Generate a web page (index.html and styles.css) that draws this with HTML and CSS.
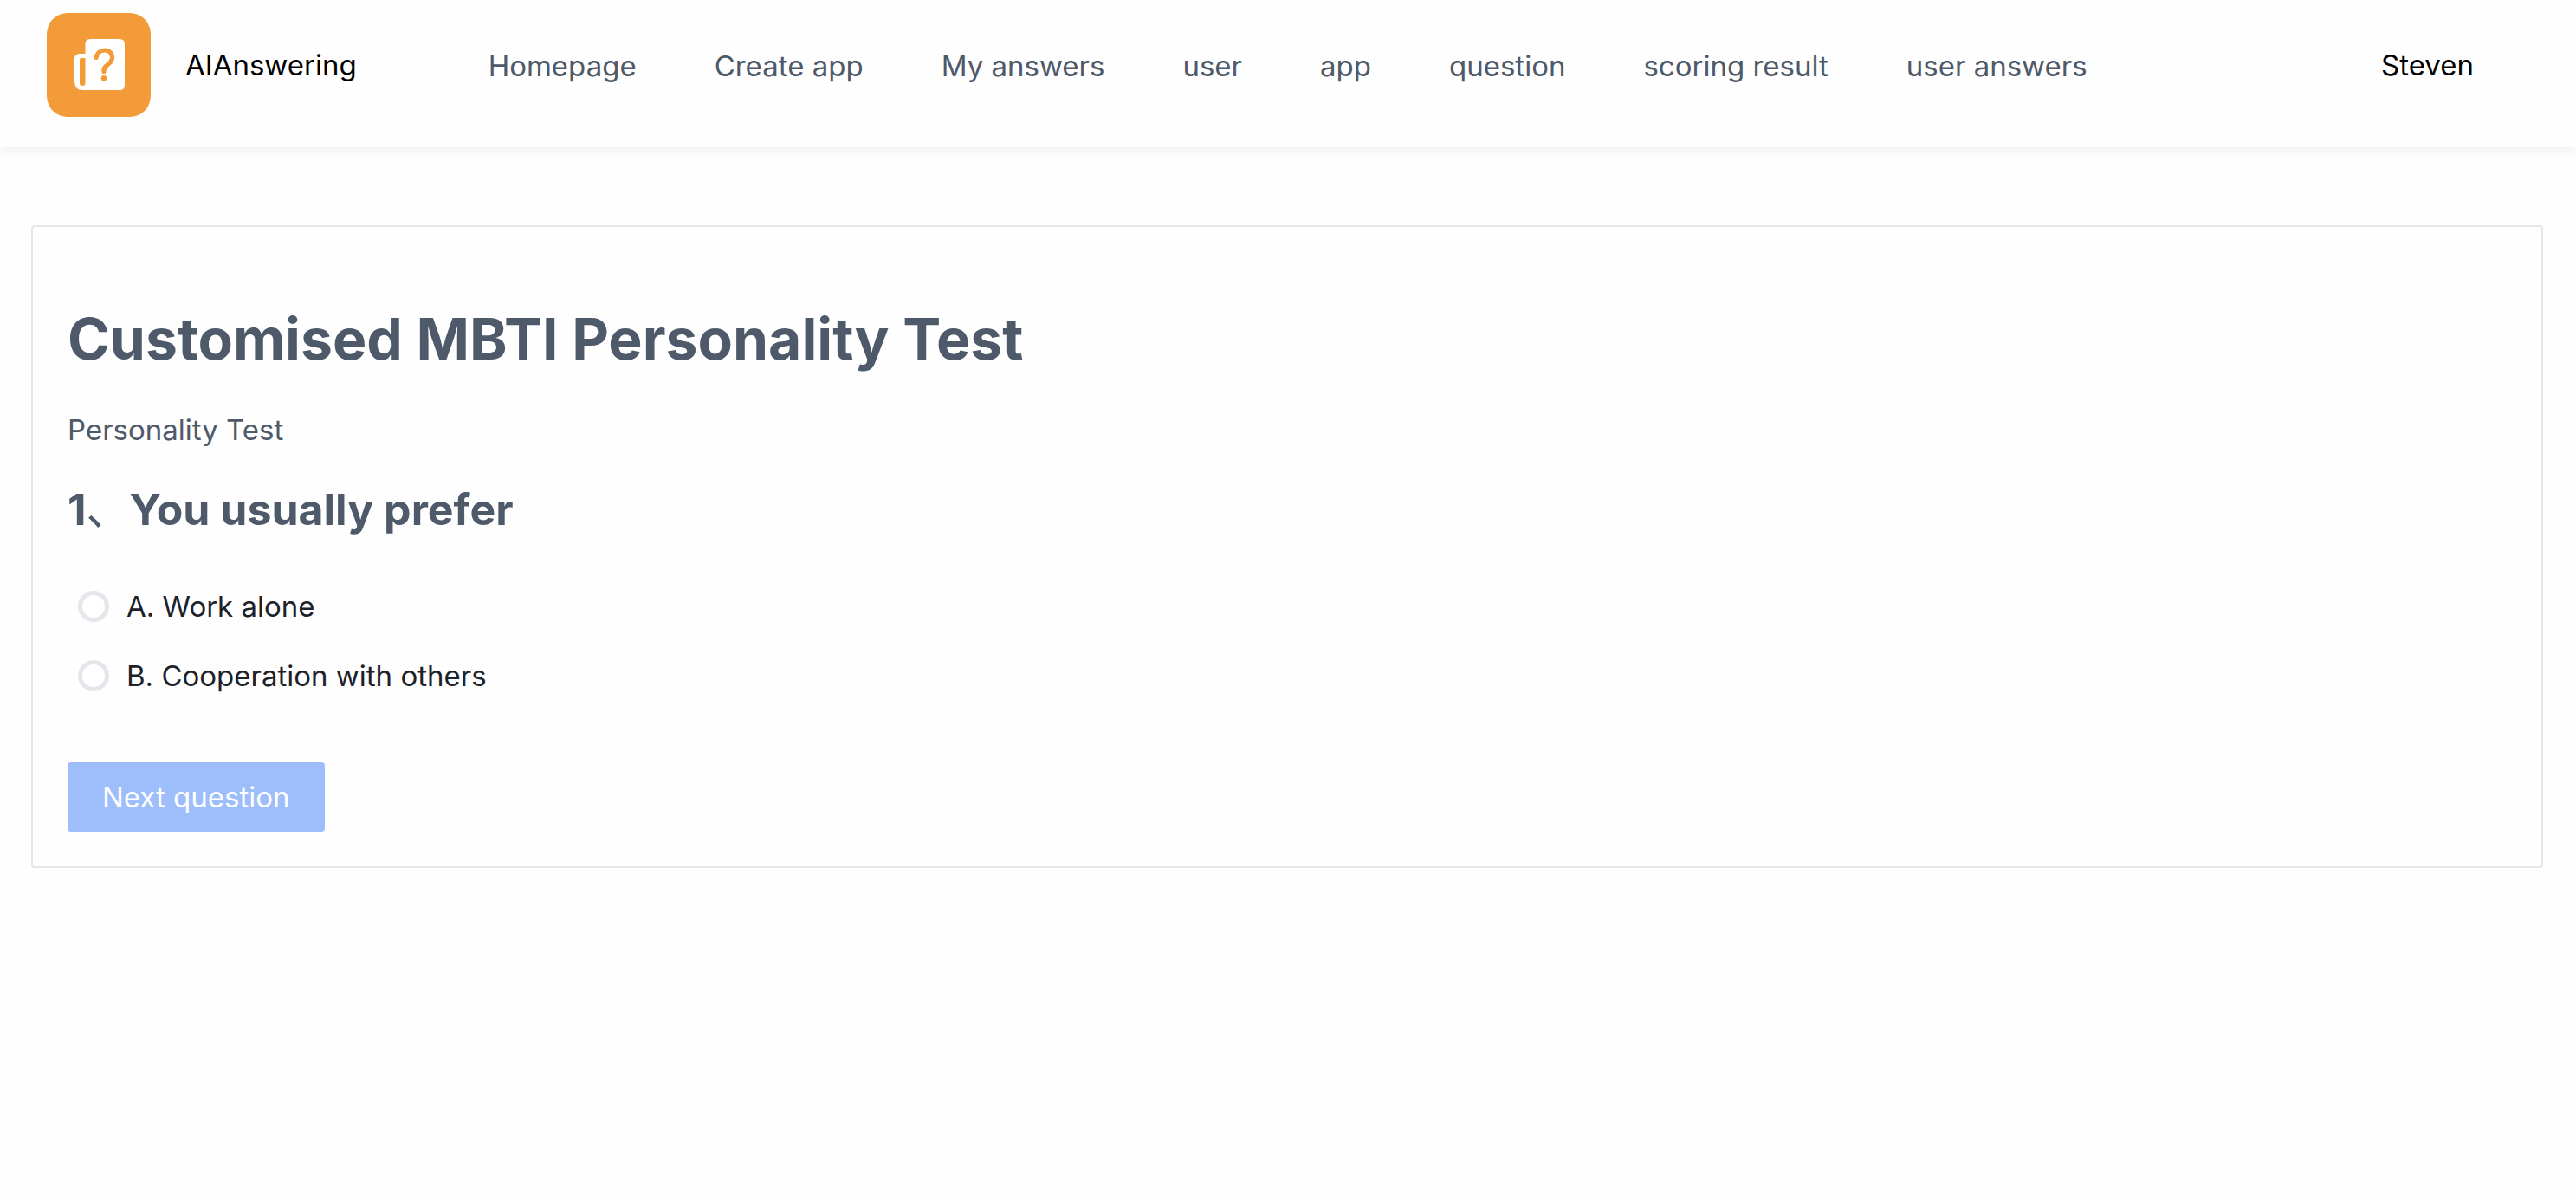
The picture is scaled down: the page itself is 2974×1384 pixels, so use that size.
FILE: index.html
```html
<!DOCTYPE html>
<html lang="en">
<head>
<meta charset="utf-8">
<meta name="viewport" content="width=device-width, initial-scale=1">
<title>AIAnswering</title>
<link rel="stylesheet" href="styles.css">
</head>
<body>
<header class="header">
  <a class="brand" href="#">
    <svg class="logo" viewBox="0 0 120 120" aria-hidden="true">
      <path fill="#f29b38" d="M26 0H94C110 0 120 10 120 26V94C120 110 110 120 94 120H26C10 120 0 110 0 94V26C0 10 10 0 26 0Z"/>
      <path fill="#fff" d="M50 30H84Q90 30 90 36V83Q90 89 84 89H42Q32 89 32 79V53Q32 47 38 47H44.500V36Q44.500 30 50 30Z"/>
      <path fill="#f29b38" d="M40 52H44.500V81Q44.500 84 41.300 84Q38 84 38 81V54Q38 52 40 52Z"/>
      <path fill="none" stroke="#f29b38" stroke-width="5.200" stroke-linecap="round" stroke-linejoin="round" d="M57.200 51.500C58 46 62 43 67 43C72 43 75.600 46.500 75.600 51C75.600 60 66 59 66 66V67.500"/>
      <circle fill="#f29b38" cx="66" cy="75.300" r="3.300"/>
    </svg>
    <span>AIAnswering</span>
  </a>
  <nav class="nav">
    <a href="#">Homepage</a>
    <a href="#">Create app</a>
    <a href="#">My answers</a>
    <a href="#">user</a>
    <a href="#">app</a>
    <a href="#">question</a>
    <a href="#">scoring result</a>
    <a href="#">user answers</a>
  </nav>
  <div class="user">Steven</div>
</header>
<main class="content">
  <form class="card">
    <h1 class="title">Customised MBTI Personality Test</h1>
    <p class="desc">Personality Test</p>
    <h2 class="question" id="question">1<span class="mark">、</span>You usually prefer</h2>
    <div class="options" role="radiogroup" aria-labelledby="question">
      <label class="option"><input type="radio" name="answer" value="A">A. Work alone</label>
      <label class="option"><input type="radio" name="answer" value="B">B. Cooperation with others</label>
    </div>
    <button class="next" type="button" disabled>Next question</button>
  </form>
</main>
</body>
</html>
```
FILE: styles.css
```css
* {
  box-sizing: border-box;
}

body {
  margin: 0;
  background: #fefefe;
  color: #4e5969;
  font-family: Inter, "Noto Sans CJK SC", sans-serif;
  font-size: 33px;
  line-height: 52px;
}

a {
  color: inherit;
  text-decoration: none;
}

.header {
  display: flex;
  align-items: center;
  padding: 15px 118px 35px 54px;
  background: #fefefe;
  box-shadow: 0 2px 14px #ececec;
}

.brand {
  display: flex;
  align-items: center;
  gap: 40px;
  color: #000;
}

.logo {
  width: 120px;
  height: 120px;
}

.nav {
  display: flex;
  flex: 1;
  gap: 90px;
  margin-left: 152px;
  padding-top: 2px;
  white-space: nowrap;
}

.user {
  color: #000;
}

.content {
  padding: 90px 38px 40px 36px;
}

.card {
  padding: 78px 40px 40px;
  border: 2px solid #e5e6eb;
  border-radius: 4px;
  background: #fefefe;
}

.title {
  margin: 0 0 28px;
  font-size: 66px;
  line-height: 102px;
}

.desc {
  margin: 0 0 28px;
}

.question {
  margin: 0 0 34px;
  font-size: 50px;
  line-height: 76px;
}

.mark {
  font-weight: 400;
}

.options {
  display: grid;
  justify-items: start;
  margin-bottom: 60px;
}

.option {
  display: flex;
  align-items: center;
  gap: 20px;
  height: 80px;
  padding-left: 12px;
  color: #1d2129;
}

.option input {
  appearance: none;
  width: 36px;
  height: 36px;
  margin: 0;
  border: 5px solid #e5e6eb;
  border-radius: 50%;
  background: #fff;
}

.option input:checked {
  border: 10px solid #165dff;
}

.next {
  display: block;
  height: 80px;
  padding: 0 40px;
  border: 0;
  border-radius: 4px;
  background: #9ebdfb;
  color: #fff;
  font: inherit;
}
```
